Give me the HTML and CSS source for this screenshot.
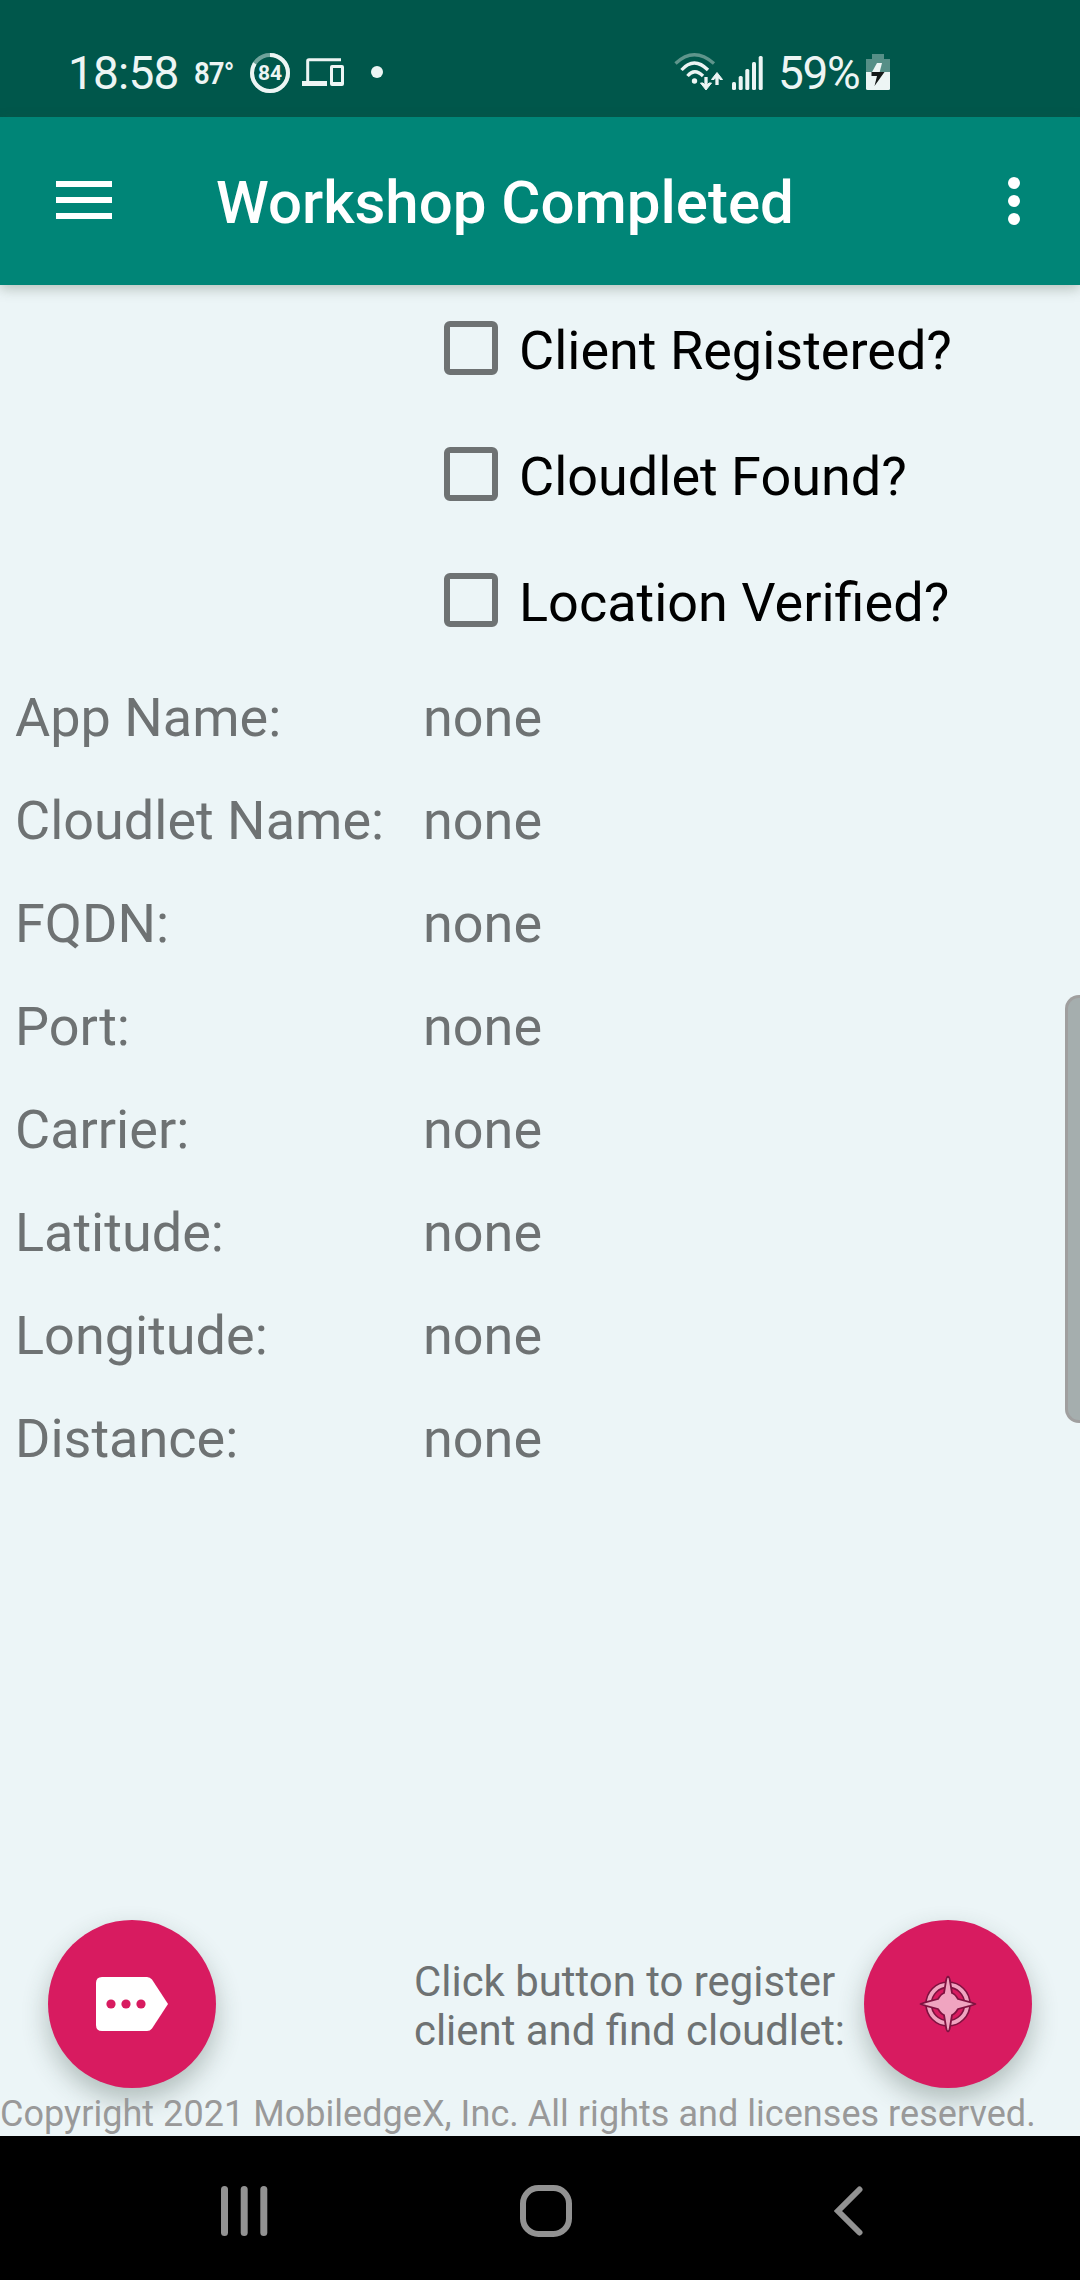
FILE: index.html
```html
<!DOCTYPE html>
<html lang="en">
<head>
<meta charset="utf-8">
<title>Workshop Completed</title>
<link rel="stylesheet" href="styles.css">
</head>
<body>
<div class="screen">
  <div class="status">
    <span class="clock">18:58</span>
    <span class="temp">87°</span>
    <svg class="ring" width="40" height="40" viewBox="0 0 40 40"><circle cx="20" cy="20" r="18" fill="none" stroke="#6fa39b" stroke-width="4"/><circle cx="20" cy="20" r="18" fill="none" stroke="#edf5f4" stroke-width="4" pathLength="100" stroke-dasharray="84 16" transform="rotate(-90 20 20)"/><text x="20" y="27" text-anchor="middle" class="ring-text">84</text></svg>
    <svg class="devices" width="42" height="29" viewBox="0 0 42 29"><path d="M39 1.700H7Q5.700 1.700 5.700 3V24" fill="none" stroke="#edf5f4" stroke-width="3"/><path d="M0 23H25V28H0Z" fill="#edf5f4"/><path fill-rule="evenodd" d="M30 7H40Q42 7 42 9V26Q42 28 40 28H30Q28 28 28 26V9Q28 7 30 7ZM31 10V24H39V10Z" fill="#edf5f4"/></svg>
    <i class="more"></i>
    <svg class="wifi" width="50" height="38" viewBox="0 0 50 38" fill="none" stroke="#edf5f4" stroke-width="3.300"><path d="M1.500 10.500Q20-7 40 10.500" stroke="#5f958c"/><path d="M7.500 17Q20 3 34 17M13.500 23Q20.500 14.500 29 23"/><circle cx="20.500" cy="28" r="2.700" fill="#edf5f4" stroke="none"/><path d="M32 24V33M43 32V22"/><path d="M26.500 30H29L32 33 35 30H37.500L32 37ZM37.500 26.500L43 19.500 48.500 26.500H46L43 23.500 40 26.500Z" fill="#edf5f4" stroke="#edf5f4" stroke-width="1"/></svg>
    <svg class="signal" width="32" height="34" viewBox="0 0 32 34" fill="#edf5f4"><rect y="26" width="4" height="8" rx="1.500"/><rect x="6.700" y="20" width="4" height="14" rx="1.500"/><rect x="13.300" y="13" width="4" height="21" rx="1.500"/><rect x="20" y="6" width="4" height="28" rx="1.500"/><rect x="26.700" width="4" height="34" rx="1.500"/></svg>
    <span class="percent">59%</span>
    <svg class="battery" width="24" height="36" viewBox="0 0 24 36"><path d="M6 0H18V5H24V18H0V5H6Z" fill="#568f87"/><path d="M0 18H24V34.500Q24 36 22.500 36H1.500Q0 36 0 34.500Z" fill="#edf5f4"/><path d="M11 9H16L13.700 18H6Z" fill="#edf5f4"/><path d="M5.500 18H18.500L8.500 32 11 22H5.500Z" fill="#151918"/></svg>
  </div>
  <header class="toolbar">
    <svg class="menu" width="56" height="38" viewBox="0 0 56 38" fill="#fff"><path d="M0 0H56V6H0ZM0 16H56V22H0ZM0 32H56V38H0Z"/></svg>
    <h1 class="title">Workshop Completed</h1>
    <svg class="overflow" width="12" height="48" viewBox="0 0 12 48" fill="#fff"><circle cx="6" cy="6" r="6"/><circle cx="6" cy="24" r="6"/><circle cx="6" cy="42" r="6"/></svg>
  </header>
  <main class="content">
    <div class="checks">
      <div class="check"><i class="box"></i><span class="label">Client Registered?</span></div>
      <div class="check"><i class="box"></i><span class="label">Cloudlet Found?</span></div>
      <div class="check"><i class="box"></i><span class="label">Location Verified?</span></div>
    </div>
    <dl class="details">
      <dt>App Name:</dt><dd>none</dd>
      <dt>Cloudlet Name:</dt><dd>none</dd>
      <dt>FQDN:</dt><dd>none</dd>
      <dt>Port:</dt><dd>none</dd>
      <dt>Carrier:</dt><dd>none</dd>
      <dt>Latitude:</dt><dd>none</dd>
      <dt>Longitude:</dt><dd>none</dd>
      <dt>Distance:</dt><dd>none</dd>
    </dl>
    <div class="actions">
      <div class="fab"><svg width="72" height="54" viewBox="0 0 72 54"><path d="M6 0H51Q54 0 56 2.500L72 27 56 51.500Q54 54 51 54H6Q0 54 0 48V6Q0 0 6 0Z" fill="#fff"/><g fill="#d81b60"><circle cx="15" cy="27" r="4.600"/><circle cx="30" cy="27" r="4.600"/><circle cx="45" cy="27" r="4.600"/></g></svg></div>
      <p class="hint">Click button to register<br>client and find cloudlet:</p>
      <div class="fab"><svg width="58" height="58" viewBox="-29 -29 58 58"><circle r="19.300" fill="none" stroke="#7f1240" stroke-width="7"/><circle r="19.300" fill="none" stroke="#f0a4c0" stroke-width="3.800"/><path d="M0-27.500Q1.500-27 2-23L4-11Q7-10 10-5L22-1.800 27.500 0 22 1.800 10 5Q7 10 4 11L2 23Q1.500 27 0 27.500-1.500 27-2 23L-4 11Q-7 10-10 5L-22 1.800-27.500 0-22-1.800-10-5Q-7-10-4-11L-2-23Q-1.500-27 0-27.500Z" fill="#f0a4c0" stroke="#7f1240" stroke-width="1.800" stroke-linejoin="round"/></svg></div>
    </div>
    <footer class="copyright">Copyright 2021 MobiledgeX, Inc. All rights and licenses reserved.</footer>
    <i class="edge-handle"></i>
  </main>
  <nav class="navbar">
    <svg width="47" height="50" viewBox="0 0 47 50" fill="#929292"><rect width="7" height="50" rx="3.500"/><rect x="19.700" width="7" height="50" rx="3.500"/><rect x="39.300" width="7" height="50" rx="3.500"/></svg>
    <svg class="home" width="52" height="52" viewBox="0 0 52 52"><rect x="3" y="3" width="46" height="46" rx="15.500" fill="none" stroke="#929292" stroke-width="6"/></svg>
    <svg class="back" width="30" height="50" viewBox="0 0 30 50"><path d="M25.500 3.500L4 25 25.500 46.500" fill="none" stroke="#929292" stroke-width="6" stroke-linecap="round"/></svg>
  </nav>
</div>
</body>
</html>
```
FILE: styles.css
```css
body { margin: 0; font-family: Roboto, "Liberation Sans", sans-serif; }
svg { display: block; flex: none; }
.screen { width: 1080px; height: 2280px; display: flex; flex-direction: column; overflow: hidden; background: #ecf5f7; }
.status { flex: none; box-sizing: border-box; height: 117px; padding: 28px 0 0 68px; display: flex; align-items: center; background: #00574b; color: #edf5f4; }
.clock { width: 126px; font-size: 46px; letter-spacing: -.8px; }
.temp { width: 56px; font-size: 30px; font-weight: 600; letter-spacing: -1px; transform: scale(.92, 1.06); transform-origin: left center; }
.ring-text { font-size: 21px; font-weight: 700; fill: #edf5f4; }
.devices { margin-left: 12px; }
.more { width: 12px; height: 12px; border-radius: 50%; background: #edf5f4; margin-left: 27px; margin-bottom: 2px; }
.wifi { margin-left: 291px; margin-bottom: 2px; }
.signal { margin-left: 8px; }
.percent { width: 88px; margin-left: 14px; font-size: 46px; letter-spacing: -1.3px; }
.battery { margin-bottom: 2px; }
.toolbar { flex: none; box-sizing: border-box; height: 168px; padding: 0 60px 0 56px; display: flex; align-items: center; background: #008577; position: relative; box-shadow: 0 4px 12px rgba(60, 80, 60, .3); }
.menu { margin-bottom: 2px; }
.title { flex: 1; margin: 0 0 0 104px; padding-top: 4px; font-size: 60px; font-weight: 500; line-height: 70px; color: #fff; }
.content { flex: 1; display: flex; flex-direction: column; position: relative; }
.checks { padding-left: 444px; }
.check { height: 126px; display: flex; align-items: center; gap: 21px; font-size: 54px; color: #000; }
.label { padding-top: 4px; }
.box { box-sizing: border-box; width: 54px; height: 54px; border: 6px solid #6e7273; border-radius: 6px; }
.details { margin: 23px 0 0 15px; display: grid; grid-template-columns: 408px 1fr; grid-auto-rows: 103px; font-size: 54px; line-height: 64px; color: #6e7273; }
.details dd { margin: 0; }
.actions { margin-top: auto; padding: 0 48px; height: 168px; display: flex; align-items: center; }
.fab { width: 168px; height: 168px; border-radius: 50%; background: #d81b60; display: flex; align-items: center; justify-content: center; box-shadow: 0 12px 26px rgba(40, 60, 50, .3); }
.hint { flex: 1; margin: 0 0 0 198px; padding-top: 4px; font-size: 41.9px; line-height: 49px; color: #6e7273; white-space: nowrap; }
.copyright { height: 48px; line-height: 52px; font-size: 36px; letter-spacing: .04px; color: #999; position: relative; white-space: nowrap; }
.edge-handle { position: absolute; right: 0; top: 710px; box-sizing: border-box; width: 15px; height: 428px; border: 3px solid #a09f9f; border-right: 0; border-radius: 14px 0 0 14px; background: #a5aeae; }
.navbar { flex: none; box-sizing: border-box; height: 144px; padding: 6px 216px 0 221px; display: flex; align-items: center; background: #000; position: relative; }
.home { margin-left: 252px; }
.back { margin-left: auto; }
```
